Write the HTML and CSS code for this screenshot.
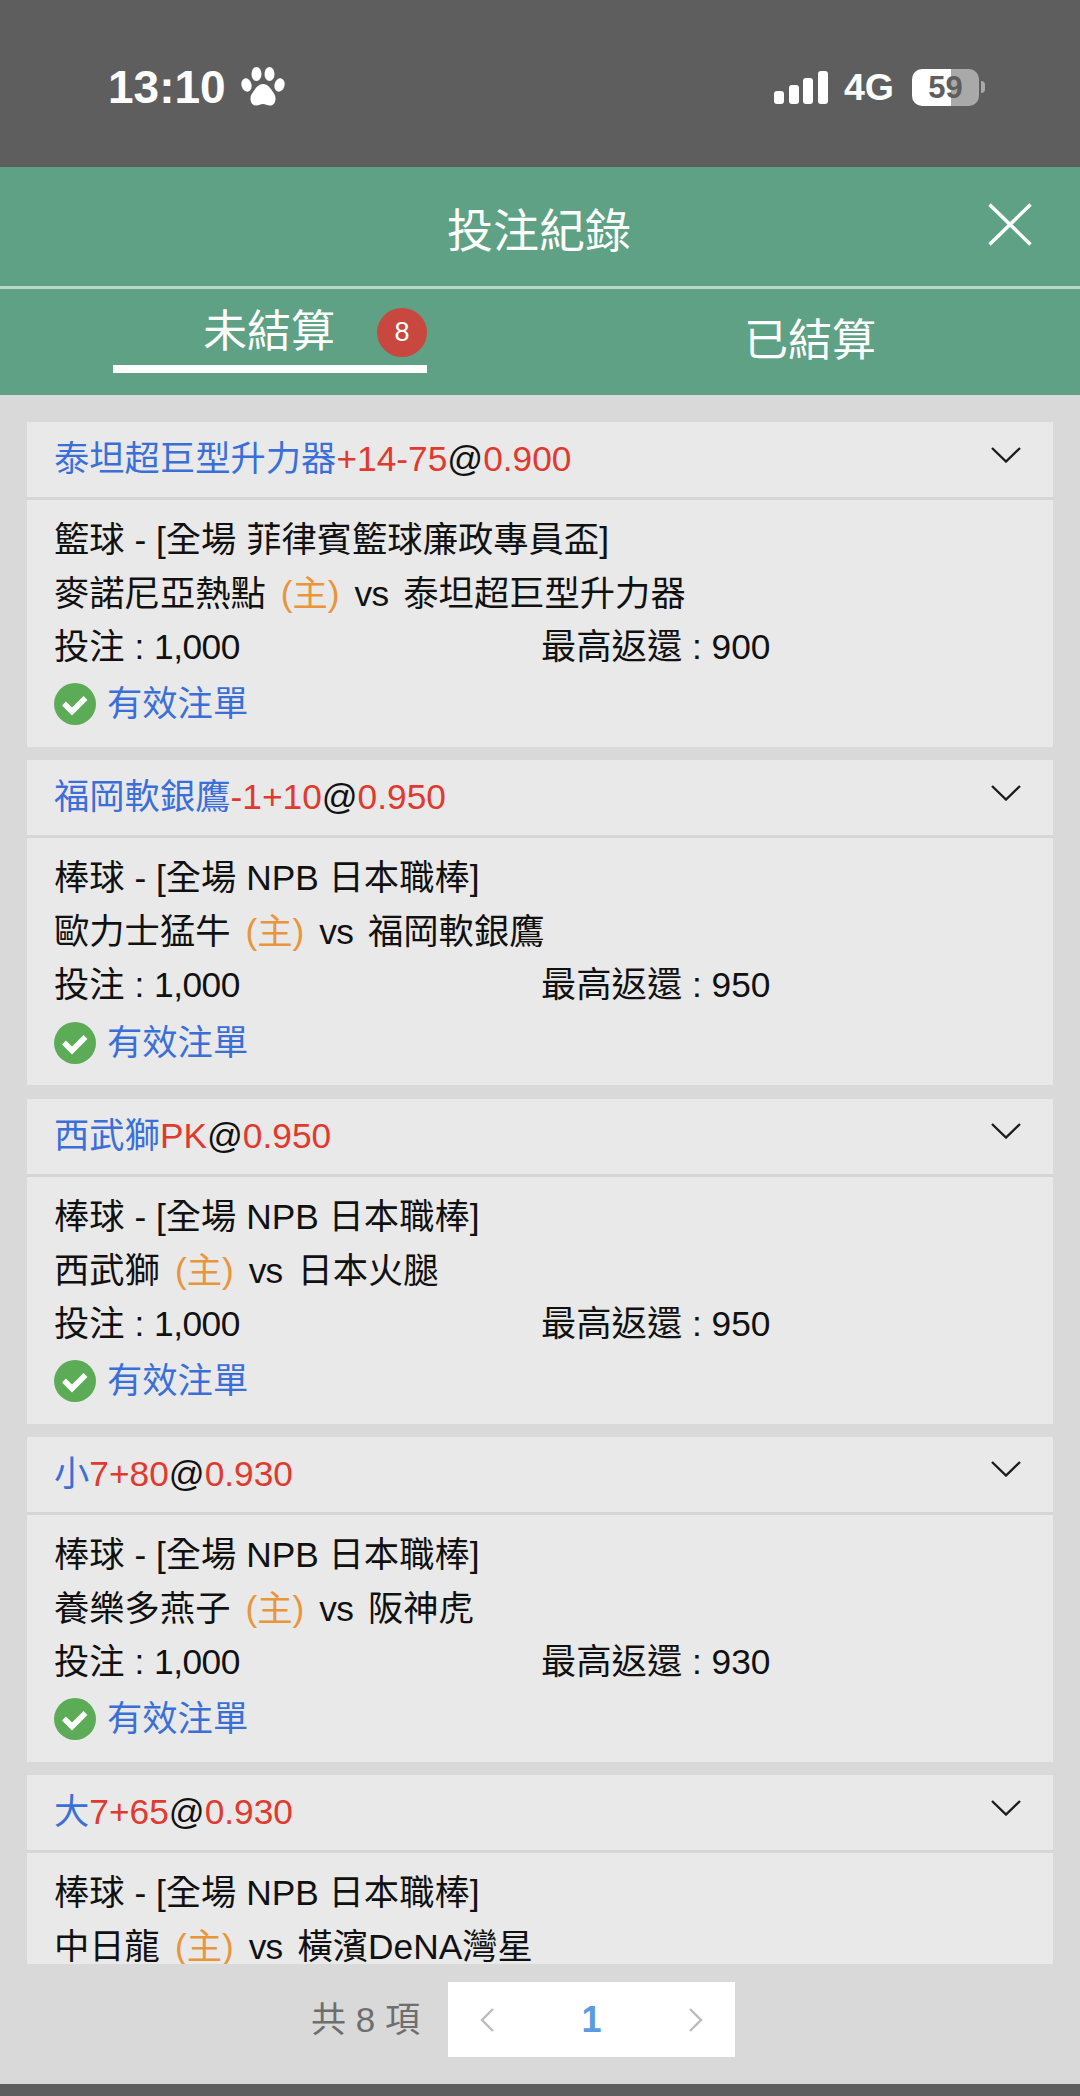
FILE: index.html
```html
<!DOCTYPE html>
<html lang="zh-Hant">
<head>
<meta charset="utf-8">
<title>投注紀錄</title>
<link rel="stylesheet" href="styles.css">
</head>
<body>
<div class="page">
  <div class="status">
    <div class="status-left">
      <span class="time">13:10</span>
      <svg class="paw" viewBox="0 0 44 40"><ellipse cx="5.500" cy="18" rx="5" ry="6.800" transform="rotate(-15 5.500 18)"/><ellipse cx="15.500" cy="7" rx="5" ry="7"/><ellipse cx="28.500" cy="7" rx="5" ry="7"/><ellipse cx="38.500" cy="18" rx="5" ry="6.800" transform="rotate(15 38.500 18)"/><path d="M22 17c5 0 8 5 11 9.500 3 4.500 1.500 12-4 12-3 0-4.500-1.500-7-1.500s-4 1.500-7 1.500c-5.500 0-7-7.500-4-12C14 22 17 17 22 17z"/></svg>
    </div>
    <div class="status-right">
      <div class="signal"><i class="b1"></i><i class="b2"></i><i class="b3"></i><i class="b4"></i></div>
      <span class="net">4G</span>
      <div class="battery">59</div>
      <span class="nub"></span>
    </div>
  </div>
  <header class="title-bar">
    <h1 class="title">投注紀錄</h1>
    <svg class="close" viewBox="0 0 44 43"><path d="M1.500 1.500L42.500 41.500M42.500 1.500L1.500 41.500"/></svg>
  </header>
  <nav class="tabs">
    <div class="tab-cell"><div class="tab active">未結算<span class="badge">8</span></div></div>
    <div class="tab-cell"><div class="tab">已結算</div></div>
  </nav>
  <main class="list">
    <section class="card">
      <div class="card-head"><div><span class="blue">泰坦超巨型升力器</span><span class="red">+14-75</span>@<span class="red">0.900</span></div><svg class="chev" viewBox="0 0 30 16"><path d="M1 1L15 14.500L29 1"/></svg></div>
      <div class="card-body">
        <div class="line">籃球 - [全場 菲律賓籃球廉政專員盃]</div>
        <div class="line">麥諾尼亞熱點<span class="orange">(主)</span><span class="vs">vs</span>泰坦超巨型升力器</div>
        <div class="line split"><span>投注 : <span class="amt">1,000</span></span><span>最高返還 : 900</span></div>
        <div class="line ok"><svg class="check" viewBox="0 0 42 42"><circle cx="21" cy="21" r="21"/><path d="M10 20.500l8 8L31.500 15"/></svg><span class="blue">有效注單</span></div>
      </div>
    </section>
    <section class="card">
      <div class="card-head"><div><span class="blue">福岡軟銀鷹</span><span class="red">-1+10</span>@<span class="red">0.950</span></div><svg class="chev" viewBox="0 0 30 16"><path d="M1 1L15 14.500L29 1"/></svg></div>
      <div class="card-body">
        <div class="line">棒球 - [全場 NPB 日本職棒]</div>
        <div class="line">歐力士猛牛<span class="orange">(主)</span><span class="vs">vs</span>福岡軟銀鷹</div>
        <div class="line split"><span>投注 : <span class="amt">1,000</span></span><span>最高返還 : 950</span></div>
        <div class="line ok"><svg class="check" viewBox="0 0 42 42"><circle cx="21" cy="21" r="21"/><path d="M10 20.500l8 8L31.500 15"/></svg><span class="blue">有效注單</span></div>
      </div>
    </section>
    <section class="card">
      <div class="card-head"><div><span class="blue">西武獅</span><span class="red">PK</span>@<span class="red">0.950</span></div><svg class="chev" viewBox="0 0 30 16"><path d="M1 1L15 14.500L29 1"/></svg></div>
      <div class="card-body">
        <div class="line">棒球 - [全場 NPB 日本職棒]</div>
        <div class="line">西武獅<span class="orange">(主)</span><span class="vs">vs</span>日本火腿</div>
        <div class="line split"><span>投注 : <span class="amt">1,000</span></span><span>最高返還 : 950</span></div>
        <div class="line ok"><svg class="check" viewBox="0 0 42 42"><circle cx="21" cy="21" r="21"/><path d="M10 20.500l8 8L31.500 15"/></svg><span class="blue">有效注單</span></div>
      </div>
    </section>
    <section class="card">
      <div class="card-head"><div><span class="blue">小</span><span class="red">7+80</span>@<span class="red">0.930</span></div><svg class="chev" viewBox="0 0 30 16"><path d="M1 1L15 14.500L29 1"/></svg></div>
      <div class="card-body">
        <div class="line">棒球 - [全場 NPB 日本職棒]</div>
        <div class="line">養樂多燕子<span class="orange">(主)</span><span class="vs">vs</span>阪神虎</div>
        <div class="line split"><span>投注 : <span class="amt">1,000</span></span><span>最高返還 : 930</span></div>
        <div class="line ok"><svg class="check" viewBox="0 0 42 42"><circle cx="21" cy="21" r="21"/><path d="M10 20.500l8 8L31.500 15"/></svg><span class="blue">有效注單</span></div>
      </div>
    </section>
    <section class="card">
      <div class="card-head"><div><span class="blue">大</span><span class="red">7+65</span>@<span class="red">0.930</span></div><svg class="chev" viewBox="0 0 30 16"><path d="M1 1L15 14.500L29 1"/></svg></div>
      <div class="card-body">
        <div class="line">棒球 - [全場 NPB 日本職棒]</div>
        <div class="line">中日龍<span class="orange">(主)</span><span class="vs">vs</span>橫濱DeNA灣星</div>
      </div>
    </section>
  </main>
  <footer class="pager">
    <span class="total">共 8 項</span>
    <div class="pages">
      <svg class="arrow" viewBox="0 0 14 24"><path d="M13 1L2 12L13 23"/></svg>
      <span class="num">1</span>
      <svg class="arrow" viewBox="0 0 14 24"><path d="M1 1L12 12L1 23"/></svg>
    </div>
  </footer>
  <div class="bottom-bar"></div>
</div>
</body>
</html>
```
FILE: styles.css
```css
* { box-sizing: border-box; }
html, body { margin: 0; padding: 0; }
body {
  font-family: "Liberation Sans", "Noto Sans CJK TC", sans-serif;
  color: #111;
}
.page {
  width: 1080px;
  height: 2096px;
  display: flex;
  flex-direction: column;
  background: #d9d9d9;
  overflow: hidden;
}
.status {
  height: 167px;
  flex: none;
  background: #5e5e5e;
  color: #fff;
  display: flex;
  justify-content: space-between;
  align-items: flex-start;
  padding: 64px 95px 0 108px;
}
.status-left { display: flex; align-items: center; gap: 15px; height: 46px; }
.time { font-size: 46px; font-weight: 700; line-height: 46px; }
.paw { width: 44px; height: 40px; fill: #fff; }
.status-right { display: flex; align-items: center; height: 46px; }
.signal { display: flex; align-items: flex-end; gap: 4.500px; height: 33px; margin-top: 1px; }
.signal i { display: block; width: 10px; background: #fff; border-radius: 3px; }
.signal .b1 { height: 13px; }
.signal .b2 { height: 19px; }
.signal .b3 { height: 26px; }
.signal .b4 { height: 33px; }
.net { font-size: 37.500px; font-weight: 700; margin-left: 16px; line-height: 36px; }
.battery {
  width: 67px;
  height: 37px;
  margin-left: 18px;
  border-radius: 10px;
  background: linear-gradient(to right, #fff 58%, #a9a9a9 58%);
  color: #5e5e5e;
  font-size: 31px;
  font-weight: 700;
  line-height: 37px;
  text-align: center;
}
.nub { width: 4px; height: 12px; margin-left: 2px; background: #a9a9a9; border-radius: 0 4px 4px 0; }

.title-bar {
  height: 119px;
  flex: none;
  background: #5ea184;
  display: flex;
  align-items: center;
  justify-content: center;
  padding-right: 2px;
  position: relative;
}
.title { margin: 0; font-size: 46px; font-weight: 400; color: #fff; }
.close { position: absolute; left: 988px; top: 36px; width: 44px; height: 43px; fill: none; stroke: #fff; stroke-width: 3.500; }

.tabs {
  height: 109px;
  flex: none;
  background: #5ea184;
  border-top: 3px solid #bcd5ca;
  display: grid;
  grid-template-columns: 1fr 1fr;
}
.tab-cell { display: flex; justify-content: center; }
.tab { font-size: 44px; color: #fff; position: relative; line-height: 60px; padding-top: 22px; }
.tab.active {
  width: 314px;
  height: 84px;
  padding-top: 13px;
  padding-right: 2px;
  text-align: center;
  border-bottom: 8px solid #fff;
}
.badge {
  position: absolute;
  right: 0;
  top: 19px;
  width: 50px;
  height: 49px;
  border-radius: 50%;
  background: #c8483f;
  color: #fff;
  font-size: 27px;
  line-height: 49px;
  text-align: center;
}

.list {
  flex: none;
  height: 1569px;
  overflow: hidden;
  padding: 27px 27px 0;
  display: flex;
  flex-direction: column;
  gap: 13.300px;
}
.card { flex: none; background: #e9e9e9; }
.card-head {
  height: 78px;
  border-bottom: 3px solid #d6d6d6;
  padding: 0 32px 2px 27px;
  display: flex;
  align-items: center;
  justify-content: space-between;
  font-size: 35.300px;
  line-height: 55px;
}
.chev { width: 30px; height: 16px; margin-top: -8px; fill: none; stroke: #1c1c1c; stroke-width: 2.400; }
.card-body { padding: 13px 27px 14.800px; font-size: 35.300px; line-height: 54px; }
.line { white-space: nowrap; }
.line:nth-child(1) { height: 54px; }
.line:nth-child(2) { height: 53.200px; }
.line:nth-child(3) { height: 56.500px; }
.line:nth-child(4) { height: 55.500px; }
.split { display: grid; grid-template-columns: 487px 1fr; }
.amt { letter-spacing: -0.500px; }
.vs { margin-right: 15px; letter-spacing: -0.800px; }
.ok { display: flex; align-items: center; gap: 11px; }
.check { width: 42px; height: 42px; flex: none; }
.check circle { fill: #5cab56; }
.check path { fill: none; stroke: #fff; stroke-width: 5.500; }
.blue { color: #3b6fd8; }
.red { color: #e03a2e; }
.orange { color: #e8953c; margin: 0 15px; }

.pager {
  flex: none;
  height: 121px;
  display: flex;
  justify-content: flex-end;
  padding: 19px 345px 0 0;
  gap: 28px;
  margin-top: -1px;
}
.total { font-size: 35px; color: #6e6e6e; line-height: 76px; }
.pages {
  width: 287px;
  height: 75px;
  background: #fff;
  display: flex;
  align-items: center;
  justify-content: space-between;
  padding: 0 32px;
}
.arrow { width: 14px; height: 24px; fill: none; stroke: #bbb; stroke-width: 2.400; }
.num { font-size: 36px; font-weight: 700; color: #5b9be0; }
.bottom-bar { flex: 1; background: #5e5e5e; }
```
